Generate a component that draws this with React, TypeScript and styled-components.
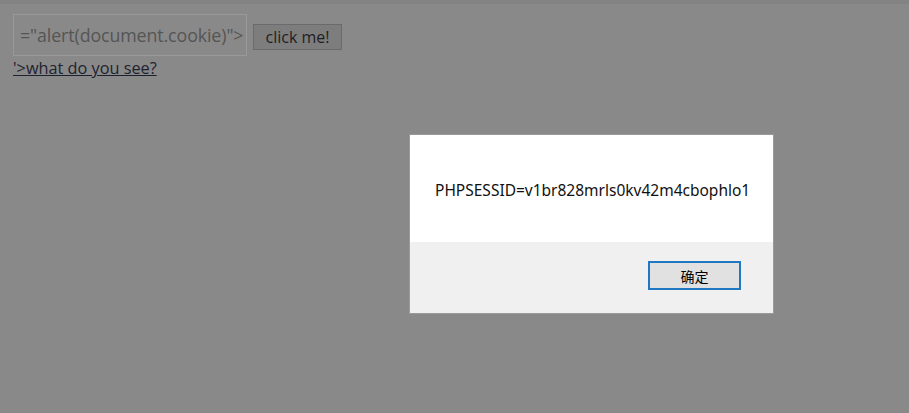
import React from "react";
import styled, { createGlobalStyle } from "styled-components";

const Global = createGlobalStyle`
  html, body { margin: 0; padding: 0; }
  body { background: #898989; width: 909px; height: 413px; overflow: hidden; }
`;

const Page = styled.div`
  position: relative;
  width: 909px;
  height: 413px;
  background: #898989;
  font-family: "Open Sans", "Noto Sans", sans-serif;
`;

const TopBand = styled.div`
  height: 4px;
  background: #838383;
`;

const Content = styled.div`
  padding: 10px 13px 0;
`;

const FormRow = styled.div`
  display: flex;
  align-items: center;
  gap: 6px;
`;

const FakeInput = styled.div`
  box-sizing: border-box;
  width: 234px;
  height: 42px;
  border: 1px solid #999999;
  display: flex;
  align-items: center;
  padding-left: 6px;
  overflow: hidden;
  white-space: nowrap;
  font-size: 17.8px;
  color: #555555;
  letter-spacing: -0.1px;
`;

const Button = styled.button`
  box-sizing: border-box;
  width: 89px;
  height: 26px;
  margin-top: 3px;
  background: #7d7d7d;
  border: 1px solid #6b6b6b;
  color: #1f1f1f;
  font-family: "Open Sans", sans-serif;
  font-size: 16px;
  padding: 0;
  display: flex;
  align-items: center;
  justify-content: center;
`;

const Link = styled.a`
  display: block;
  margin-top: 1px;
  font-size: 16.3px;
  line-height: 22px;
  color: #1e2230;
  text-decoration: underline;
`;

const Dialog = styled.div`
  position: absolute;
  left: 409px;
  top: 134px;
  box-sizing: border-box;
  width: 365px;
  height: 180px;
  border: 1px solid #9a9a9a;
  background: #f0f0f0;
  display: flex;
  flex-direction: column;
  font-family: "Noto Sans", "Noto Sans CJK SC", sans-serif;
`;

const Message = styled.div`
  height: 107px;
  background: #ffffff;
  display: flex;
  align-items: center;
  padding-left: 25px;
  font-size: 15.5px;
  color: #111;
  box-sizing: border-box;
  padding-top: 2px;
`;

const Footer = styled.div`
  flex: 1;
  display: flex;
  justify-content: flex-end;
  align-items: flex-start;
  padding: 19px 32px 0 0;
`;

const OkButton = styled.button`
  box-sizing: border-box;
  width: 93px;
  height: 29px;
  background: #e1e1e1;
  border: 2px solid #1f78c1;
  color: #000;
  font-family: "Noto Sans CJK SC", sans-serif;
  font-size: 14px;
  padding: 0;
`;

export default function App() {
  return (
    <Page>
      <Global />
      <TopBand />
      <Content>
        <FormRow>
          <FakeInput>="alert(document.cookie)"&gt;</FakeInput>
          <Button>click me!</Button>
        </FormRow>
        <Link href="#">'&gt;what do you see?</Link>
      </Content>
      <Dialog>
        <Message>PHPSESSID=v1br828mrls0kv42m4cbophlo1</Message>
        <Footer>
          <OkButton>确定</OkButton>
        </Footer>
      </Dialog>
    </Page>
  );
}
